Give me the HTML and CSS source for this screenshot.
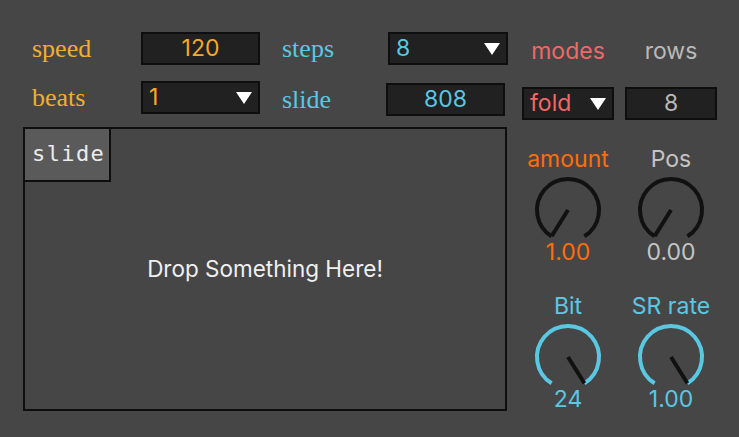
FILE: index.html
```html
<!DOCTYPE html>
<html>
<head>
<meta charset="utf-8">
<link rel="stylesheet" href="styles.css">
</head>
<body>
<div class="device">
  <div class="left">
    <div class="controls">
      <div class="lbl lbl-orange">speed</div>
      <div class="box box-center txt-orange">120</div>
      <div class="lbl lbl-cyan">steps</div>
      <div class="box menu txt-cyan box-shift">8<svg class="arrow" viewBox="0 0 16 12" width="16" height="12"><polygon points="0,0 16,0 8,12" fill="#fff"/></svg></div>

      <div class="lbl lbl-orange">beats</div>
      <div class="box menu txt-orange">1<svg class="arrow" viewBox="0 0 16 12" width="16" height="12"><polygon points="0,0 16,0 8,12" fill="#fff"/></svg></div>
      <div class="lbl lbl-cyan lbl-low">slide</div>
      <div class="box box-center txt-cyan box-low">808</div>
    </div>
    <div class="drop">
      <div class="tab">slide</div>
      <div class="drop-text">Drop Something Here!</div>
    </div>
  </div>

  <div class="right">
    <div class="pair">
      <div class="cap txt-red">modes</div>
      <div class="cap txt-grey">rows</div>
    </div>
    <div class="pair pair-boxes">
      <div class="box menu small txt-red">fold<svg class="arrow" viewBox="0 0 16 12" width="16" height="12"><polygon points="0,0 16,0 8,12" fill="#fff"/></svg></div>
      <div class="box box-center small txt-grey">8</div>
    </div>
    <div class="knobs">
      <div class="knob">
        <div class="cap txt-amber">amount</div>
        <svg class="dial" viewBox="0 0 70 64" width="70" height="64">
          <path d="M18.6 61.3 A31 31 0 1 1 51.4 61.3" fill="none" stroke="#111" stroke-width="4"/>
          <line x1="35" y1="35" x2="18.6" y2="61.3" stroke="#111" stroke-width="4"/>
        </svg>
        <div class="val txt-amber">1.00</div>
      </div>
      <div class="knob">
        <div class="cap txt-light">Pos</div>
        <svg class="dial" viewBox="0 0 70 64" width="70" height="64">
          <path d="M18.6 61.3 A31 31 0 1 1 51.4 61.3" fill="none" stroke="#111" stroke-width="4"/>
          <line x1="35" y1="35" x2="18.6" y2="61.3" stroke="#111" stroke-width="4"/>
        </svg>
        <div class="val txt-light">0.00</div>
      </div>
      <div class="knob">
        <div class="cap txt-cyan">Bit</div>
        <svg class="dial" viewBox="0 0 70 64" width="70" height="64">
          <path d="M18.6 61.3 A31 31 0 1 1 51.4 61.3" fill="none" stroke="#5ac8e3" stroke-width="4"/>
          <line x1="35" y1="35" x2="51.4" y2="61.3" stroke="#111" stroke-width="4"/>
        </svg>
        <div class="val txt-cyan">24</div>
      </div>
      <div class="knob">
        <div class="cap txt-cyan">SR rate</div>
        <svg class="dial" viewBox="0 0 70 64" width="70" height="64">
          <path d="M18.6 61.3 A31 31 0 1 1 51.4 61.3" fill="none" stroke="#5ac8e3" stroke-width="4"/>
          <line x1="35" y1="35" x2="51.4" y2="61.3" stroke="#111" stroke-width="4"/>
        </svg>
        <div class="val txt-cyan">1.00</div>
      </div>
    </div>
  </div>
</div>
</body>
</html>
```

FILE: styles.css
```css
* { box-sizing: border-box; }

html, body {
  margin: 0;
  padding: 0;
  background: #464646;
  width: 739px;
  height: 437px;
  overflow: hidden;
}

.device {
  display: flex;
  padding: 32px 0 0 23px;
  font-family: Inter, "Liberation Sans", sans-serif;
}

.left {
  width: 484px;
  display: flex;
  flex-direction: column;
}

.controls {
  display: grid;
  grid-template-columns: 109px 141px 104px 122px;
  row-gap: 14px;
  padding-left: 9px;
  align-items: center;
}

.lbl {
  font-family: "Liberation Serif", "DejaVu Serif", serif;
  font-size: 26px;
  line-height: 28px;
}
.lbl-low { margin-top: 4px; }

.lbl-orange { color: #f2ae2e; }
.lbl-cyan { color: #5ac8e3; }

.box {
  height: 33px;
  width: 119px;
  background: #212121;
  border: 2px solid #0e0e0e;
  font-size: 23px;
  line-height: 29px;
  display: flex;
  align-items: center;
}
.box-center { justify-content: center; }
.menu {
  justify-content: space-between;
  padding: 0 6px 0 6px;
}
.box-shift { margin-left: 2px; width: 120px; }
.box-low { margin-top: 4px; }
.small { width: 92px; }

.arrow { display: block; }

.txt-orange { color: #f4a928; }
.txt-cyan { color: #5ac8e3; }
.txt-red { color: #f06868; }
.txt-grey { color: #b9b9b9; }
.txt-amber { color: #ff6d0a; }
.txt-light { color: #c4c4c4; }

.drop {
  position: relative;
  margin-top: 11px;
  height: 284px;
  border: 2px solid #0e0e0e;
  display: grid;
  place-items: center;
}

.tab {
  position: absolute;
  top: -2px;
  left: -2px;
  width: 88px;
  height: 55px;
  background: #5a5a5a;
  border: 2px solid #0e0e0e;
  color: #ececec;
  font-family: "DejaVu Sans Mono", "Liberation Mono", monospace;
  font-size: 22px;
  letter-spacing: 1.4px;
  padding: 13px 0 0 7px;
  line-height: 24px;
}

.drop-text {
  color: #f0f0f0;
  font-size: 22.5px;
  line-height: 26px;
}

.right {
  margin-left: 15px;
  width: 195px;
  display: flex;
  flex-direction: column;
  padding-top: 7px;
}

.pair {
  display: grid;
  grid-template-columns: 92px 92px;
  column-gap: 11px;
  justify-items: center;
}
.pair-boxes { margin-top: 24px; }

.cap, .val {
  font-size: 23px;
  line-height: 24px;
  text-align: center;
}
.val { margin-top: 1px; }

.knobs {
  margin-top: 27px;
  display: grid;
  grid-template-columns: 92px 92px;
  column-gap: 11px;
  row-gap: 30px;
}

.knob {
  display: flex;
  flex-direction: column;
  align-items: center;
}

.dial {
  display: block;
  margin-top: 4px;
}
```
